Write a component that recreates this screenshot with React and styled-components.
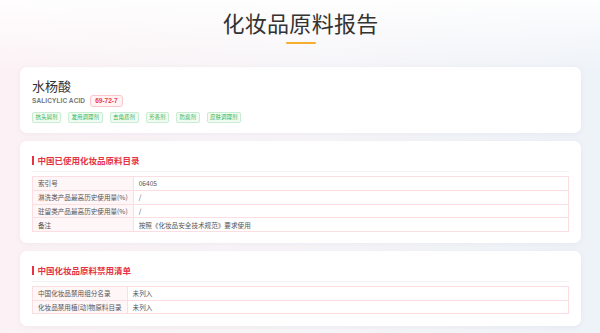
import React from "react";
import styled, { createGlobalStyle } from "styled-components";

const Global = createGlobalStyle`
  html, body { margin: 0; padding: 0; }
  body {
    font-family: "Noto Sans CJK SC", "Noto Sans", sans-serif;
    background: linear-gradient(to right, #fcf2f5 0%, #f7f5f8 50%, #eef3f8 100%);
    min-height: 333px;
  }
`;

const Page = styled.div`
  min-height: 333px;
  background: linear-gradient(to bottom, rgba(255,255,255,0.9) 0px, rgba(255,255,255,0) 70px);
  padding: 0 19px 0 20px;
  box-sizing: border-box;
`;

const Head = styled.header`
  display: flex;
  flex-direction: column;
  align-items: center;
  padding-top: 7px;
  height: 67px;
  box-sizing: border-box;
`;

const Title = styled.h1`
  margin: 0;
  font-size: 22px;
  line-height: 30px;
  font-weight: 400;
  color: #333;
  letter-spacing: 0.3px;
`;

const Underline = styled.div`
  width: 30px;
  height: 2px;
  margin-top: 5px;
  border-radius: 1px;
  background: #f8ad2c;
`;

const Stack = styled.div`
  display: flex;
  flex-direction: column;
  gap: 8px;
`;

const Card = styled.section`
  background: #fff;
  border-radius: 7px;
  box-shadow: 0 1px 6px rgba(120, 120, 140, 0.08);
  padding: ${(p) => p.$pad};
`;

const Name = styled.div`
  font-size: 13px;
  line-height: 16px;
  color: #333;
`;

const SubRow = styled.div`
  display: flex;
  align-items: center;
  gap: 5px;
  height: 13px;
`;

const Latin = styled.span`
  font-family: "Liberation Sans", Arial, sans-serif;
  font-size: 6.5px;
  font-weight: 700;
  color: #777;
  letter-spacing: 0.1px;
`;

const Cas = styled.span`
  font-family: "Liberation Sans", Arial, sans-serif;
  font-size: 6.5px;
  font-weight: 700;
  color: #e8394a;
  background: #fff3f4;
  border: 1px solid #fbc7cd;
  border-radius: 3px;
  padding: 0 4px;
  height: 10px;
  line-height: 10px;
`;

const Tags = styled.div`
  display: flex;
  gap: 7px;
  margin-top: 5px;
`;

const Tag = styled.span`
  font-size: 5.5px;
  line-height: 9px;
  color: #33b453;
  background: #f1fbf3;
  border: 1px solid #c9edd2;
  border-radius: 2px;
  padding: 0 2.5px;
`;

const SectionHead = styled.div`
  padding-bottom: 6px;
  border-bottom: 1px solid #f3f3f3;
  margin-bottom: 4px;
`;

const SectionTitle = styled.h2`
  margin: 0;
  display: flex;
  align-items: center;
  gap: 4px;
  font-size: 8.5px;
  line-height: 10px;
  font-weight: 700;
  color: #e53346;
  &::before {
    content: "";
    width: 1.5px;
    height: 9px;
    background: #e53346;
  }
`;

const Table = styled.table`
  width: 100%;
  border-collapse: collapse;
  font-size: 6.6px;
  color: #555;
`;

const Row = styled.tr`
  height: ${(p) => p.$h}px;
`;

const Key = styled.td`
  width: ${(p) => p.$w}px;
  background: #fff6f7;
  border: 1px solid #fcdde1;
  padding: 0 5px;
  white-space: nowrap;
  box-sizing: border-box;
`;

const Val = styled.td`
  border: 1px solid #fcdde1;
  padding: 0 5px;
`;

const tags = ["抗头屑剂", "发用调理剂", "去角质剂", "芳香剂", "防腐剂", "皮肤调理剂"];

const used = [
  ["索引号", "06405"],
  ["淋洗类产品最高历史使用量(%)", "/"],
  ["驻留类产品最高历史使用量(%)", "/"],
  ["备注", "按照《化妆品安全技术规范》要求使用"],
];

const banned = [
  ["中国化妆品禁用组分名录", "未列入"],
  ["化妆品禁用植(动)物原料目录", "未列入"],
];

export default function App() {
  return (
    <>
      <Global />
      <Page>
        <Head>
          <Title>化妆品原料报告</Title>
          <Underline />
        </Head>
        <Stack>
          <Card $pad="11px 12px 10px">
            <Name>水杨酸</Name>
            <SubRow>
              <Latin>SALICYLIC ACID</Latin>
              <Cas>69-72-7</Cas>
            </SubRow>
            <Tags>
              {tags.map((t) => (
                <Tag key={t}>{t}</Tag>
              ))}
            </Tags>
          </Card>
          <Card $pad="14px 12px 11px">
            <SectionHead>
              <SectionTitle>中国已使用化妆品原料目录</SectionTitle>
            </SectionHead>
            <Table>
              <tbody>
                {used.map(([k, v]) => (
                  <Row key={k} $h={13.75}>
                    <Key $w={99}>{k}</Key>
                    <Val>{v}</Val>
                  </Row>
                ))}
              </tbody>
            </Table>
          </Card>
          <Card $pad="14px 12px 12px">
            <SectionHead>
              <SectionTitle>中国化妆品原料禁用清单</SectionTitle>
            </SectionHead>
            <Table>
              <tbody>
                {banned.map(([k, v]) => (
                  <Row key={k} $h={13.5}>
                    <Key $w={94}>{k}</Key>
                    <Val>{v}</Val>
                  </Row>
                ))}
              </tbody>
            </Table>
          </Card>
        </Stack>
      </Page>
    </>
  );
}
